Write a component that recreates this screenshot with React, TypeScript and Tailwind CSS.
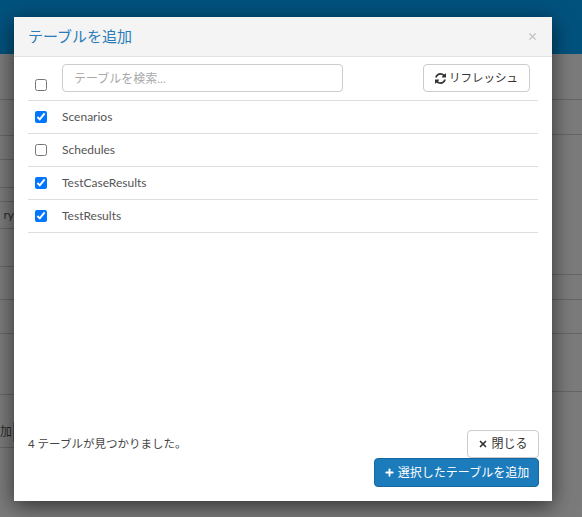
import { Plus, X } from 'lucide-react';

const tables = [
    { name: 'Scenarios', checked: true },
    { name: 'Schedules', checked: false },
    { name: 'TestCaseResults', checked: true },
    { name: 'TestResults', checked: true },
];

const font = { fontFamily: 'Lato, "Noto Sans CJK JP", sans-serif' };

function RefreshIcon() {
    return (
        <svg className="w-[11px] h-[11px]" viewBox="0 0 1536 1536" fill="currentColor">
            <path d="M1511 928q0 5-1 7-64 268-268 434.5T764 1536q-146 0-282.5-55T238 1324l-129 129q-19 19-45 19t-45-19-19-45V960q0-26 19-45t45-19h448q26 0 45 19t19 45-19 45l-137 137q71 66 161 102t187 36q134 0 250-65t186-179q11-17 53-117 8-23 30-23h192q13 0 22.5 9.5t9.5 22.5zm25-800v448q0 26-19 45t-45 19h-448q-26 0-45-19t-19-45 19-45l138-138Q969 256 768 256q-134 0-250 65T332 500q-11 17-53 117-8 23-30 23H50q-13 0-22.5-9.5T18 608v-7q65-268 270-434.5T768 0q146 0 284 55.5T1297 212l130-129q19-19 45-19t45 19 19 45z" />
        </svg>
    );
}

export default function App() {
    return (
        <div className="relative w-[582px] h-[517px] overflow-hidden bg-[#7b7b7b]" style={font}>
            {/* Dimmed page behind the dialog */}
            <div className="h-[54px] bg-[#02527e]"></div>
            <div className="flex justify-between">
                <div className="w-[14px] flex flex-col text-[12px] text-[#2a2a2a]">
                    <div className="h-[46px] border-b border-[#666]"></div>
                    <div className="h-[36px] border-b border-[#666]"></div>
                    <div className="h-[24px] border-b border-[#666]"></div>
                    <div className="h-[28px] border-b border-[#666]"></div>
                    <div className="h-[14px] border-b border-[#666]"></div>
                    <div className="h-[27px] border-b border-[#666] flex items-center justify-end overflow-hidden">ry</div>
                    <div className="h-[38px] border-b border-[#666]"></div>
                    <div className="h-[33px] border-b border-[#666]"></div>
                    <div className="h-[34px] border-b border-[#666]"></div>
                    <div className="h-[61px] border-b border-[#666]"></div>
                    <div className="h-[53px] border-b border-[#666] flex items-end pb-[5px] justify-end overflow-hidden whitespace-nowrap">
                        <span className="border-r border-[#555] pr-[1px] leading-[20px]">追加</span>
                    </div>
                </div>
                <div className="w-[30px] flex flex-col">
                    <div className="h-[46px] border-b border-[#666]"></div>
                    <div className="h-[35px] border-b border-[#666]"></div>
                    <div className="h-[140px] border-b border-[#666]"></div>
                    <div className="h-[25px] border-b border-[#666]"></div>
                    <div className="h-[34px] border-b border-[#666]"></div>
                    <div className="h-[58px] border-b border-[#666]"></div>
                </div>
            </div>

            {/* Dialog */}
            <div className="absolute left-[14px] top-[17px] w-[538px] h-[484px] bg-white flex flex-col shadow-[0_5px_20px_rgba(0,0,0,0.6)]">
                <div className="h-[40px] shrink-0 bg-[#f4f4f4] border-b border-[#e2e2e2] flex items-center justify-between pl-[14px] pr-[14px]">
                    <h4 className="text-[15px] text-[#2a7bb9] leading-none">テーブルを追加</h4>
                    <X className="w-[11px] h-[11px] text-[#c2c2c2]" strokeWidth={2.5} />
                </div>

                <div className="flex-1 px-[14px] pt-[7px]">
                    <div className="flex items-start border-b border-[#dddddd] pb-[8px]">
                        <div className="w-[34px] pl-[7px] pt-[15px] flex">
                            <input type="checkbox" className="w-[12px] h-[12px] m-0" />
                        </div>
                        <input
                            type="text"
                            placeholder="テーブルを検索..."
                            className="w-[281px] h-[28px] border border-[#cccccc] rounded-[4px] px-[11px] text-[12px] text-[#555] placeholder:text-[#a9a9a9] outline-none"
                        />
                        <div className="flex-1"></div>
                        <button className="mr-[8px] w-[107px] h-[28px] border border-[#cccccc] rounded-[4px] bg-white flex items-center justify-center gap-[3px] text-[11.5px] text-[#333]">
                            <RefreshIcon />
                            リフレッシュ
                        </button>
                    </div>
                    {tables.map((t) => (
                        <div key={t.name} className="h-[33px] flex items-center border-b border-[#dddddd]">
                            <div className="w-[34px] pl-[7px] flex">
                                <input type="checkbox" defaultChecked={t.checked} className="w-[12px] h-[12px] m-0" />
                            </div>
                            <span className="text-[12px] text-[#555]">{t.name}</span>
                        </div>
                    ))}
                </div>

                <div className="shrink-0 flex justify-between items-start pl-[14px] pr-[13px] pb-[14px]">
                    <p className="text-[11.5px] text-[#444] pt-[5px]">4 テーブルが見つかりました。</p>
                    <div className="flex flex-col items-end">
                        <button className="w-[72px] h-[28px] border border-[#cccccc] rounded-[4px] bg-white flex items-center justify-center gap-[3px] text-[12px] text-[#333]">
                            <X className="w-[10px] h-[10px]" strokeWidth={4} />
                            閉じる
                        </button>
                        <button className="w-[165px] h-[29px] rounded-[4px] bg-[#1b7bbb] border border-[#17689e] flex items-center justify-center gap-[3px] text-[12px] text-white">
                            <Plus className="w-[11px] h-[11px]" strokeWidth={4} />
                            選択したテーブルを追加
                        </button>
                    </div>
                </div>
            </div>
        </div>
    );
}
